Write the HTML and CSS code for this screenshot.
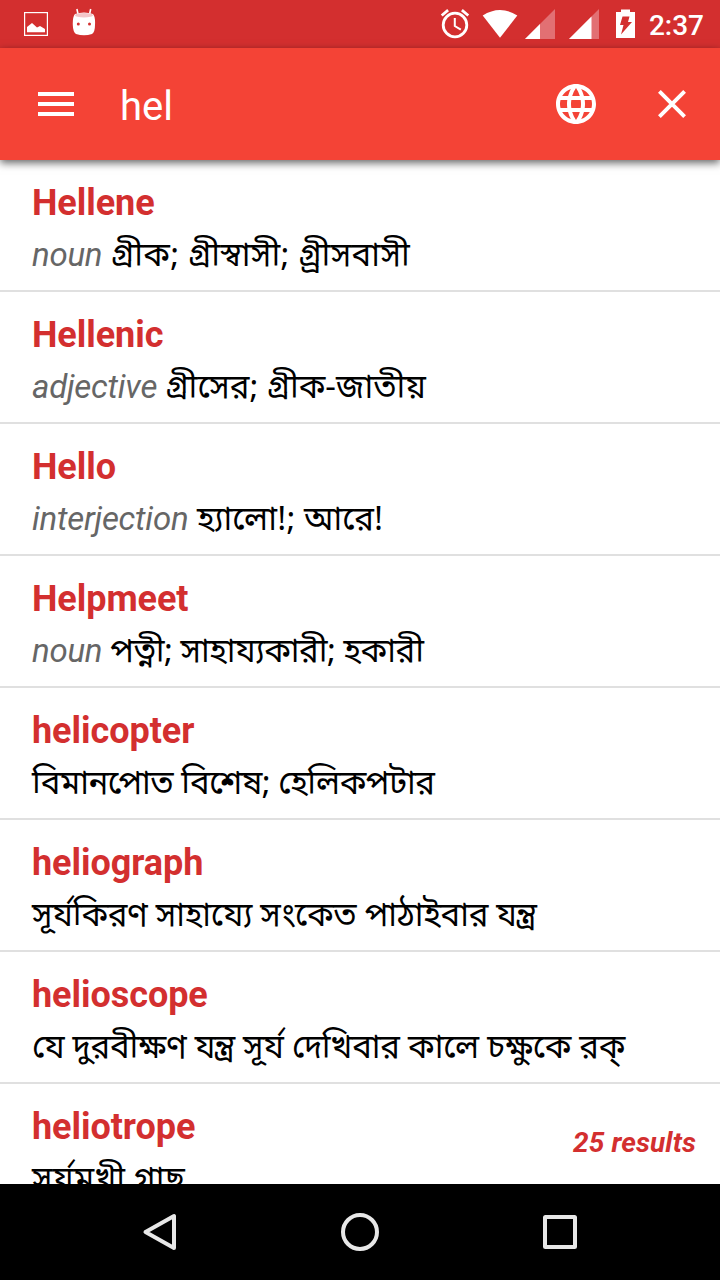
FILE: index.html
```html
<!DOCTYPE html>
<html lang="en">
<head>
  <meta charset="UTF-8">
  <meta name="viewport" content="width=device-width, initial-scale=1.0">
  <title>Dictionary</title>
  <link rel="stylesheet" href="styles.css">
</head>
<body>
  <div class="status-bar">
    <div class="status-left">
      <svg width="24" height="24" viewBox="0 0 24 24">
        <rect x="0.6" y="0.6" width="22.8" height="22.8" fill="none" stroke="#fff" stroke-width="1.2"/>
        <path d="M3 20.3V15l5-4 5 4.5 3-1.5 5 3v3.3z" fill="#fff"/>
      </svg>
      <svg width="24" height="28" viewBox="0 0 24 28">
        <path d="M6 6L4.9 1M17.6 6l1.1-5" stroke="#fff" stroke-width="1.6"/>
        <path d="M3 6Q12 3 21 6Q23.500 9 23 17Q23 24 20 26Q12 28.500 4 26Q1 24 .8 17Q.5 9 3 6z" fill="#fff"/>
        <ellipse cx="12" cy="7.200" rx="9" ry="2.300" fill="#f4c6c9"/>
        <circle cx="6.300" cy="16" r="1.500" fill="#d32f2f"/>
        <circle cx="17.500" cy="16" r="1.500" fill="#d32f2f"/>
      </svg>
    </div>
    <div class="status-right">
      <svg width="280" height="48" viewBox="440 0 280 48" class="status-icons">
        <g fill="none" stroke="#fff" stroke-width="2.800">
          <circle cx="455" cy="25" r="11.800"/>
          <path d="M454.800 18v8l6 3.700" stroke-width="2"/>
          <path d="M441.700 15.500l6.400-5.300M468.300 15.500l-6.400-5.300"/>
        </g>
        <path d="M482.700 15.500Q500 4.500 517.300 15.500L500 37.800z" fill="#fff"/>
        <path d="M525 39L555 9v30z" fill="#e27073"/>
        <path d="M525 39l15-15v15z" fill="#fff"/>
        <path d="M569 39l30-30v30z" fill="#e27073"/>
        <path d="M569 39l22.500-22.500V39z" fill="#fff"/>
        <path d="M616 12h5V9.500h9V12h5v26h-19z" fill="#fff"/>
        <path d="M622.500 16.500h7l-1.500 5.500h4l-11 12.500 2.500-9.500h-3.500z" fill="#d32f2f"/>
      </svg>
      <span class="clock">2:37</span>
    </div>
  </div>

  <header class="toolbar">
    <svg class="menu-icon" width="36" height="24" viewBox="0 0 36 24">
      <path d="M0 2h36M0 12h36M0 22h36" stroke="#fff" stroke-width="4"/>
    </svg>
    <span class="query">hel</span>
    <svg class="globe-icon" width="40" height="40" viewBox="2 2 20 20" fill="#fff">
      <path d="M11.990 2C6.470 2 2 6.480 2 12s4.470 10 9.990 10C17.520 22 22 17.520 22 12S17.520 2 11.990 2zm6.930 6h-2.950a15.650 15.650 0 0 0-1.380-3.560A8.030 8.030 0 0 1 18.920 8zM12 4.040c.83 1.200 1.480 2.530 1.910 3.960h-3.820c.43-1.430 1.080-2.760 1.910-3.960zM4.260 14C4.100 13.360 4 12.690 4 12s.1-1.360.26-2h3.380c-.08.66-.14 1.320-.14 2s.06 1.340.14 2H4.260zm.82 2h2.950c.32 1.250.78 2.450 1.380 3.560A7.990 7.990 0 0 1 5.080 16zm2.950-8H5.080a7.990 7.990 0 0 1 4.330-3.560A15.650 15.650 0 0 0 8.030 8zM12 19.960c-.83-1.200-1.480-2.530-1.910-3.960h3.820c-.43 1.430-1.080 2.760-1.910 3.960zM14.340 14H9.660c-.09-.66-.16-1.320-.16-2s.07-1.350.16-2h4.680c.09.65.16 1.320.16 2s-.07 1.340-.16 2zm.25 5.560c.6-1.110 1.060-2.310 1.380-3.560h2.950a8.030 8.030 0 0 1-4.330 3.560zM16.360 14c.08-.66.14-1.320.14-2s-.06-1.340-.14-2h3.380c.16.64.26 1.310.26 2s-.1 1.360-.26 2h-3.380z"/>
    </svg>
    <svg class="close-icon" width="28" height="28" viewBox="0 0 28 28">
      <path d="M1.400 1.400l25.200 25.200M26.600 1.400L1.400 26.600" stroke="#fff" stroke-width="3.900"/>
    </svg>
  </header>

  <main class="results">
    <div class="entry">
      <h2>Hellene</h2>
      <p class="wide"><i>noun</i> গ্রীক; গ্রীস্বাসী; গ্র্রীসবাসী</p>
    </div>
    <div class="entry">
      <h2>Hellenic</h2>
      <p><i>adjective</i> গ্রীসের; গ্রীক-জাতীয়</p>
    </div>
    <div class="entry">
      <h2>Hello</h2>
      <p><i>interjection</i> হ্যালো!; আরে!</p>
    </div>
    <div class="entry">
      <h2>Helpmeet</h2>
      <p class="tight"><i>noun</i> পত্নী; সাহায্যকারী; হকারী</p>
    </div>
    <div class="entry">
      <h2>helicopter</h2>
      <p class="tight">বিমানপোত বিশেষ; হেলিকপটার</p>
    </div>
    <div class="entry">
      <h2>heliograph</h2>
      <p class="snug">সূর্যকিরণ সাহায্যে সংকেত পাঠাইবার যন্ত্র</p>
    </div>
    <div class="entry">
      <h2>helioscope</h2>
      <p class="snug">যে দুরবীক্ষণ যন্ত্র সূর্য দেখিবার কালে চক্ষুকে রক্</p>
    </div>
    <div class="entry">
      <h2>heliotrope</h2>
      <p class="wide">সূর্যমুখী গাছ</p>
    </div>
    <div class="result-count">25 results</div>
  </main>

  <nav class="nav-bar">
    <svg width="40" height="40" viewBox="0 0 40 40"><path d="M34 4v32L5.500 20z"/></svg>
    <svg width="40" height="40" viewBox="0 0 40 40"><circle cx="20" cy="20" r="17"/></svg>
    <svg width="40" height="40" viewBox="0 0 40 40"><rect x="5" y="5" width="30" height="30" rx="0.500"/></svg>
  </nav>
</body>
</html>
```
FILE: styles.css
```css
body {
  margin: 0;
  height: 1280px;
  display: flex;
  flex-direction: column;
  overflow: hidden;
  background-color: #fff;
  font-family: Roboto, "Noto Sans", sans-serif;
}
svg {
  display: block;
  flex: none;
}
.status-bar {
  height: 48px;
  flex: none;
  display: flex;
  justify-content: space-between;
  background-color: #d32f2f;
}
.status-left {
  display: flex;
  align-items: flex-start;
  gap: 24px;
  padding: 8px 0 0 24px;
}
.status-left svg:first-child {
  margin-top: 4px;
}
.status-right {
  position: relative;
  width: 280px;
}
.clock {
  position: absolute;
  right: 16px;
  top: 9px;
  color: #fff;
  font-size: 28px;
  font-weight: 500;
  line-height: 34px;
}
.toolbar {
  position: relative;
  z-index: 1;
  height: 112px;
  flex: none;
  box-sizing: border-box;
  display: flex;
  align-items: center;
  padding: 0 34px 0 38px;
  background-color: #f44336;
  box-shadow: 0 3px 8px rgba(0, 0, 0, 0.6);
}
.query {
  flex: 1;
  margin: 4px 0 0 46px;
  color: #fff;
  font-size: 40px;
}
.close-icon {
  margin-left: 62px;
}
.results {
  position: relative;
  flex: 1;
  min-height: 0;
  overflow: hidden;
}
.entry {
  height: 132px;
  box-sizing: border-box;
  padding: 21px 32px 0;
  border-bottom: 2px solid #e0e0e0;
  white-space: nowrap;
}
.entry h2 {
  margin: 0;
  color: #d32f2f;
  font-size: 36px;
  line-height: 44px;
  letter-spacing: -0.05px;
}
.entry p {
  margin: 10px 0 0;
  color: #000;
  font-family: "Noto Sans Bengali", "Noto Sans", sans-serif;
  font-size: 33px;
  line-height: 46px;
}
.entry .tight {
  letter-spacing: -0.5px;
}
.entry .snug {
  letter-spacing: -0.28px;
}
.entry .wide {
  letter-spacing: 0.35px;
}
.entry i {
  color: #666;
  font-family: Roboto, sans-serif;
  font-size: 33px;
  line-height: 0;
  letter-spacing: -0.25px;
}
.result-count {
  position: absolute;
  right: 24px;
  bottom: 23px;
  color: #d32f2f;
  font-size: 28px;
  font-style: italic;
  font-weight: bold;
  line-height: 36px;
  letter-spacing: 0.1px;
}
.nav-bar {
  height: 96px;
  flex: none;
  display: flex;
  justify-content: center;
  align-items: center;
  gap: 160px;
  background-color: #000;
}
.nav-bar svg {
  fill: none;
  stroke: #e8e8e8;
  stroke-width: 4;
  stroke-linejoin: round;
}
```
